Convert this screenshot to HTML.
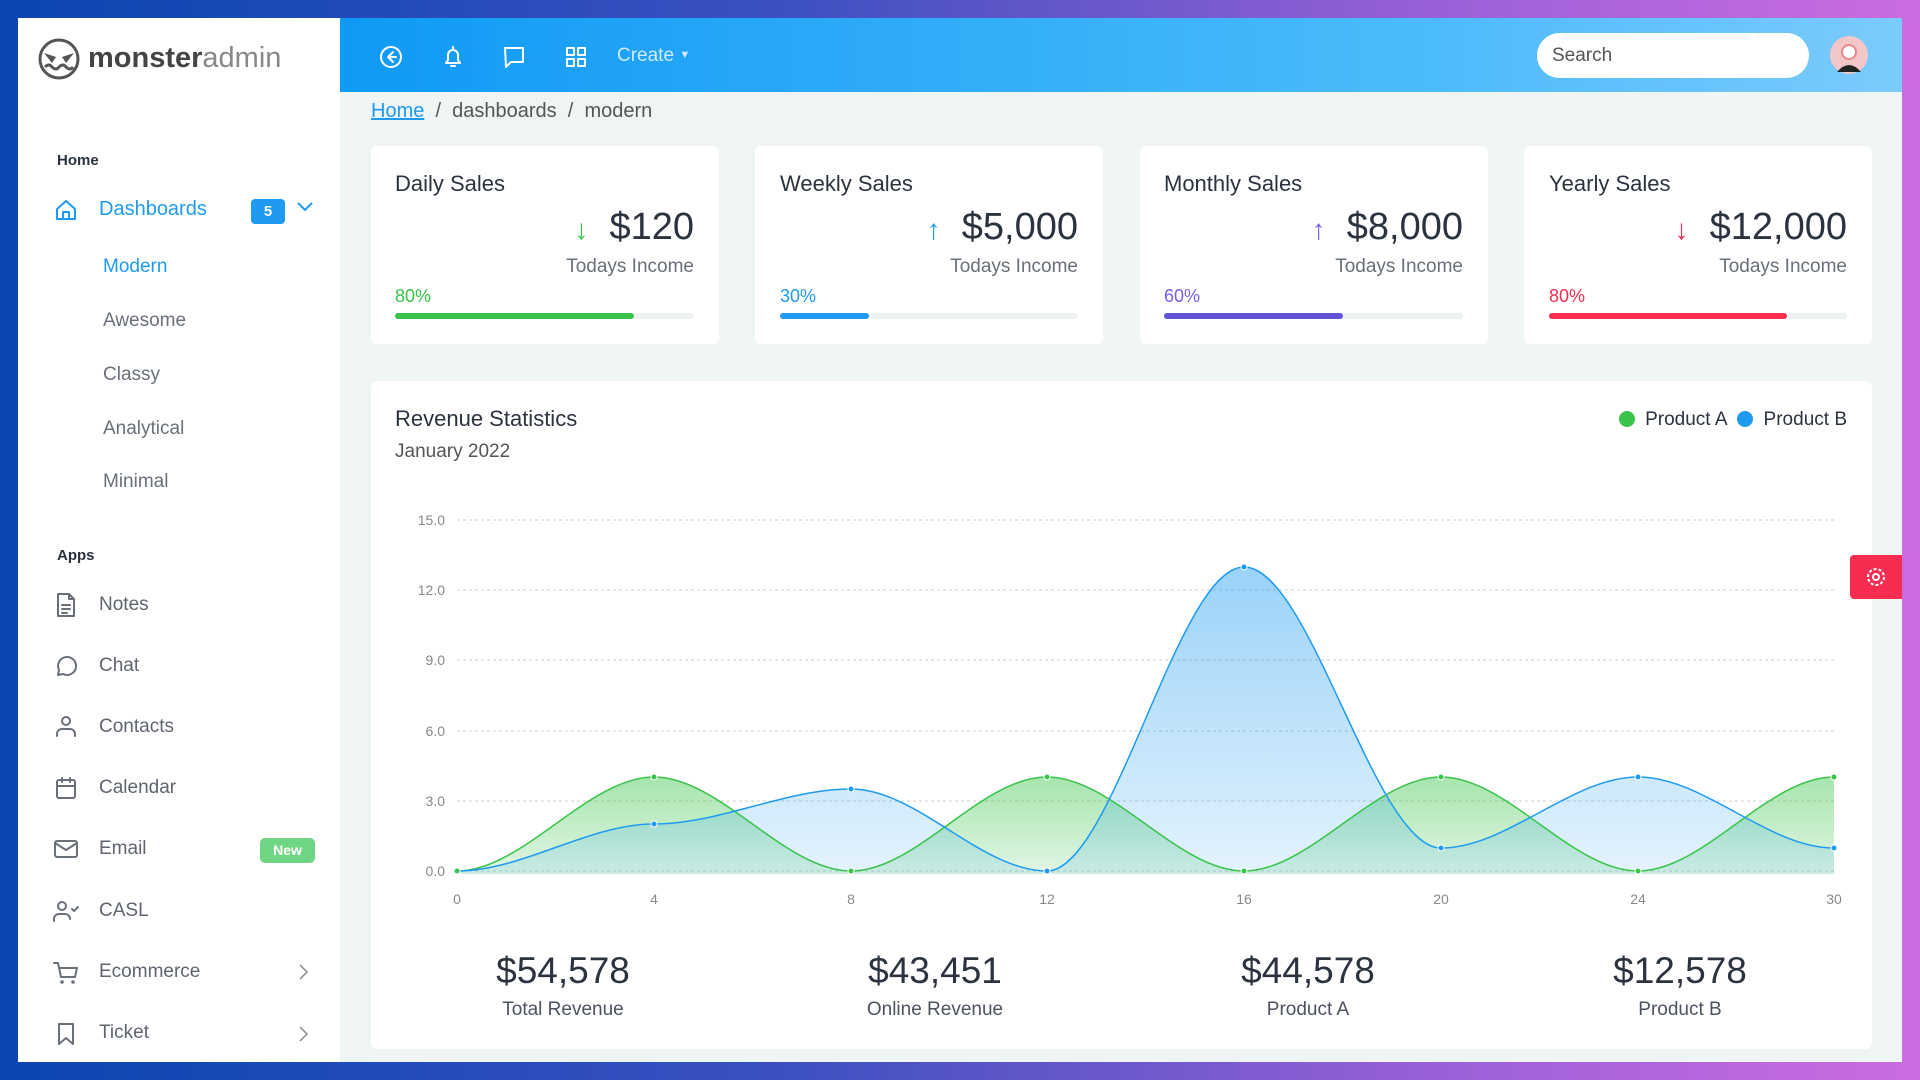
<!DOCTYPE html>
<html><head><meta charset="utf-8"><style>
*{margin:0;padding:0;box-sizing:border-box}
body{width:1920px;height:1080px;overflow:hidden;font-family:"Liberation Sans",sans-serif;background:linear-gradient(90deg,#0a46b0 0%,#3a50c0 40%,#9a60d8 75%,#cc6ce0 100%);position:relative}
.a{position:absolute}
#side{left:18px;top:18px;width:322px;height:1044px;background:#fff}
#main{left:340px;top:92px;width:1562px;height:970px;background:#eff4f5}
#hdr{left:340px;top:18px;width:1562px;height:74px;background:linear-gradient(90deg,#0f9af5,#4cbbfb 70%,#7ccafc)}
.cap{font-size:15px;font-weight:bold;color:#2b3340}
.it{font-size:19px;color:#5f6570}
.sub{font-size:19px;color:#6a707a}
.ic{stroke:#6a707a;fill:none;stroke-width:2;stroke-linecap:round;stroke-linejoin:round}
.card{background:#fff;border-radius:6px}
.ct{font-size:22px;color:#2b3340}
.amt{font-size:38px;color:#2b3340;text-align:right}
.ti{font-size:19px;color:#6a707a;text-align:right}
.bar{height:6px;border-radius:3px;background:#eef2f3}
.hi{stroke:#fff;fill:none;stroke-width:2;stroke-linecap:round;stroke-linejoin:round}
.sv{font-size:37px;color:#2b3340;text-align:center;width:300px}
.sl{font-size:19px;color:#4c5260;text-align:center;width:300px}
</style></head><body>
<div class="a" id="side"></div>
<div class="a" id="main"></div>
<div class="a" id="hdr"></div>

<svg class="a" style="left:36px;top:37px" width="46" height="44" viewBox="0 0 46 44"><circle cx="23" cy="22" r="19" fill="none" stroke="#555" stroke-width="3"/><path d="M8 16 L20 20 L16 26 Z M38 16 L26 20 L30 26 Z" fill="#555"/><path d="M9 30 q4 -4 7 0 q4 4 7 0 q4 -4 7 0 q4 4 7 0" stroke="#555" stroke-width="3" fill="none"/></svg>
<div class="a" style="left:88px;top:42px;font-size:29px;color:#444"><b>monster</b><span style="color:#888">admin</span></div>

<div class="a cap" style="left:57px;top:152px">Home</div>
<svg class="a" style="left:54px;top:198px" width="24" height="24" viewBox="0 0 24 24"><path d="M3 11 L12 3 L21 11 V21 H3 Z M9 21 V14 H15 V21" stroke="#1e9bf0" stroke-width="2" fill="none" stroke-linejoin="round"/></svg>
<div class="a" style="left:99px;top:198px;font-size:20px;color:#1e9bf0">Dashboards</div>
<div class="a" style="left:251px;top:199px;width:34px;height:25px;background:#1e9bf0;border-radius:4px;color:#fff;font-size:15px;font-weight:bold;text-align:center;line-height:25px">5</div>
<svg class="a" style="left:295px;top:200px" width="20" height="14" viewBox="0 0 20 14"><path d="M3 3 L10 10 L17 3" stroke="#1e9bf0" stroke-width="2" fill="none"/></svg>
<div class="a" style="left:103px;top:256px;font-size:19px;color:#1e9bf0">Modern</div>
<div class="a sub" style="left:103px;top:310px">Awesome</div>
<div class="a sub" style="left:103px;top:364px">Classy</div>
<div class="a sub" style="left:103px;top:418px">Analytical</div>
<div class="a sub" style="left:103px;top:471px">Minimal</div>
<div class="a cap" style="left:57px;top:547px">Apps</div>

<svg class="a" style="left:54px;top:592px" width="24" height="26" viewBox="0 0 24 26"><path class="ic" d="M4 2 H15 L20 7 V24 H4 Z M15 2 V7 H20 M8 13 H16 M8 17 H16 M8 21 H13"/></svg>
<div class="a it" style="left:99px;top:594px">Notes</div>
<svg class="a" style="left:54px;top:654px" width="24" height="24" viewBox="0 0 24 24"><path class="ic" d="M4 21 L5 16 A9 9 0 1 1 9 20 Z"/></svg>
<div class="a it" style="left:99px;top:655px">Chat</div>
<svg class="a" style="left:54px;top:714px" width="24" height="24" viewBox="0 0 24 24"><circle class="ic" cx="12" cy="7" r="4"/><path class="ic" d="M3 22 V20 A5 5 0 0 1 8 15 H16 A5 5 0 0 1 21 20 V22"/></svg>
<div class="a it" style="left:99px;top:716px">Contacts</div>
<svg class="a" style="left:54px;top:776px" width="24" height="24" viewBox="0 0 24 24"><rect class="ic" x="3" y="4" width="18" height="18" rx="2"/><path class="ic" d="M3 10 H21 M8 2 V6 M16 2 V6"/></svg>
<div class="a it" style="left:99px;top:777px">Calendar</div>
<svg class="a" style="left:53px;top:838px" width="26" height="22" viewBox="0 0 26 22"><rect class="ic" x="2" y="3" width="22" height="16" rx="2"/><path class="ic" d="M2 5 L13 12 L24 5"/></svg>
<div class="a it" style="left:99px;top:838px">Email</div>
<div class="a" style="left:260px;top:838px;width:55px;height:25px;background:#6fd683;border-radius:5px;color:#fff;font-size:14px;font-weight:bold;text-align:center;line-height:25px">New</div>
<svg class="a" style="left:52px;top:899px" width="28" height="24" viewBox="0 0 28 24"><circle class="ic" cx="10" cy="7" r="4"/><path class="ic" d="M2 22 V20 A5 5 0 0 1 7 15 H13 A5 5 0 0 1 18 20 M20 10 L22 12 L26 8"/></svg>
<div class="a it" style="left:99px;top:900px">CASL</div>
<svg class="a" style="left:52px;top:960px" width="28" height="26" viewBox="0 0 28 26"><path class="ic" d="M2 3 H6 L9 17 H23 L25 8 H8"/><circle cx="10" cy="22" r="1.8" fill="#6a707a"/><circle cx="21" cy="22" r="1.8" fill="#6a707a"/></svg>
<div class="a it" style="left:99px;top:961px">Ecommerce</div>
<svg class="a" style="left:297px;top:962px" width="14" height="20" viewBox="0 0 14 20"><path d="M3 3 L10 10 L3 17" stroke="#888" stroke-width="1.5" fill="none"/></svg>
<svg class="a" style="left:55px;top:1021px" width="22" height="26" viewBox="0 0 22 26"><path class="ic" d="M4 3 H18 V23 L11 17 L4 23 Z"/></svg>
<div class="a it" style="left:99px;top:1022px">Ticket</div>
<svg class="a" style="left:297px;top:1024px" width="14" height="20" viewBox="0 0 14 20"><path d="M3 3 L10 10 L3 17" stroke="#888" stroke-width="1.5" fill="none"/></svg>

<svg class="a" style="left:378px;top:44px" width="26" height="26" viewBox="0 0 26 26"><circle class="hi" cx="13" cy="13" r="10"/><path class="hi" d="M15 8 L10 13 L15 18 M10 13 H18"/></svg>
<svg class="a" style="left:440px;top:44px" width="26" height="26" viewBox="0 0 26 26"><path class="hi" d="M6 19 H20 L18 16 V11 A5 5 0 0 0 8 11 V16 Z M11 22 H15 M13 3 V5"/></svg>
<svg class="a" style="left:501px;top:44px" width="26" height="26" viewBox="0 0 26 26"><path class="hi" d="M4 4 H22 V18 H10 L5 23 Z"/></svg>
<svg class="a" style="left:563px;top:44px" width="26" height="26" viewBox="0 0 26 26"><rect class="hi" x="4" y="4" width="7" height="7"/><rect class="hi" x="15" y="4" width="7" height="7"/><rect class="hi" x="4" y="15" width="7" height="7"/><rect class="hi" x="15" y="15" width="7" height="7"/></svg>
<div class="a" style="left:617px;top:45px;font-size:19px;color:#cfeafd">Create <span style="font-size:11px;vertical-align:3px">▼</span></div>
<div class="a" style="left:1537px;top:33px;width:272px;height:45px;background:#fff;border-radius:23px;font-size:19px;color:#555;padding:12px 15px">Search</div>
<svg class="a" style="left:1830px;top:36px" width="38" height="38" viewBox="0 0 38 38"><circle cx="19" cy="19" r="19" fill="#f3c7c7"/><circle cx="19" cy="16" r="7" fill="#fff" stroke="#e58a8a" stroke-width="2"/><path d="M7 36 Q19 22 31 36 Z" fill="#222"/></svg>

<div class="a" style="left:371px;top:100px;font-size:20px;color:#555"><span style="color:#1e9bf0;text-decoration:underline">Home</span>&nbsp; / &nbsp;dashboards&nbsp; / &nbsp;modern</div>

<div class="a card" style="left:371px;top:146px;width:348px;height:198px"></div>
<div class="a card" style="left:755px;top:146px;width:348px;height:198px"></div>
<div class="a card" style="left:1140px;top:146px;width:348px;height:198px"></div>
<div class="a card" style="left:1524px;top:146px;width:348px;height:198px"></div>

<div class="a ct" style="left:395px;top:171px">Daily Sales</div>
<div class="a amt" style="left:395px;top:206px;width:299px"><span style="color:#39c449;font-size:28px">↓</span>&nbsp; $120</div>
<div class="a ti" style="left:395px;top:256px;width:299px">Todays Income</div>
<div class="a" style="left:395px;top:286px;font-size:18px;color:#39c449">80%</div>
<div class="a bar" style="left:395px;top:313px;width:299px"><div class="bar" style="width:80%;background:#39c449"></div></div>

<div class="a ct" style="left:780px;top:171px">Weekly Sales</div>
<div class="a amt" style="left:780px;top:206px;width:298px"><span style="color:#1e9bf0;font-size:28px">↑</span>&nbsp; $5,000</div>
<div class="a ti" style="left:780px;top:256px;width:298px">Todays Income</div>
<div class="a" style="left:780px;top:286px;font-size:18px;color:#1e9bf0">30%</div>
<div class="a bar" style="left:780px;top:313px;width:298px"><div class="bar" style="width:30%;background:#1e9bf0"></div></div>

<div class="a ct" style="left:1164px;top:171px">Monthly Sales</div>
<div class="a amt" style="left:1164px;top:206px;width:299px"><span style="color:#7460ee;font-size:28px">↑</span>&nbsp; $8,000</div>
<div class="a ti" style="left:1164px;top:256px;width:299px">Todays Income</div>
<div class="a" style="left:1164px;top:286px;font-size:18px;color:#7460ee">60%</div>
<div class="a bar" style="left:1164px;top:313px;width:299px"><div class="bar" style="width:60%;background:#6153d6"></div></div>

<div class="a ct" style="left:1549px;top:171px">Yearly Sales</div>
<div class="a amt" style="left:1549px;top:206px;width:298px"><span style="color:#f62d51;font-size:28px">↓</span>&nbsp; $12,000</div>
<div class="a ti" style="left:1549px;top:256px;width:298px">Todays Income</div>
<div class="a" style="left:1549px;top:286px;font-size:18px;color:#f62d51">80%</div>
<div class="a bar" style="left:1549px;top:313px;width:298px"><div class="bar" style="width:80%;background:#f62d51"></div></div>

<div class="a card" style="left:371px;top:381px;width:1501px;height:668px"></div>
<div class="a" style="left:395px;top:406px;font-size:22px;color:#2b3340">Revenue Statistics</div>
<div class="a" style="left:395px;top:441px;font-size:19px;color:#555">January 2022</div>
<div class="a" style="left:1599px;top:409px;width:248px;text-align:right;font-size:19px;color:#2b3340;white-space:nowrap"><span style="display:inline-block;width:16px;height:16px;border-radius:50%;background:#39c449;vertical-align:-2px"></span>&nbsp; Product A &nbsp;<span style="display:inline-block;width:16px;height:16px;border-radius:50%;background:#1e9bf0;vertical-align:-2px"></span>&nbsp; Product B</div>

<svg class="a" style="left:0;top:0" width="1920" height="1080">
<defs>
<linearGradient id="gb" x1="0" y1="0" x2="0" y2="1"><stop offset="0" stop-color="#1e9bf0" stop-opacity=".45"/><stop offset="1" stop-color="#1e9bf0" stop-opacity=".12"/></linearGradient>
<linearGradient id="gg" x1="0" y1="0" x2="0" y2="1"><stop offset="0" stop-color="#39c449" stop-opacity=".45"/><stop offset="1" stop-color="#39c449" stop-opacity=".15"/></linearGradient>
</defs>
<g stroke="#ccc" stroke-dasharray="3 3" stroke-width="1">
<line x1="457" y1="520" x2="1834" y2="520"/><line x1="457" y1="590" x2="1834" y2="590"/><line x1="457" y1="660" x2="1834" y2="660"/><line x1="457" y1="731" x2="1834" y2="731"/><line x1="457" y1="801" x2="1834" y2="801"/><line x1="457" y1="871" x2="1834" y2="871"/>
</g>
<g font-family="Liberation Sans" font-size="14" fill="#888" text-anchor="end">
<text x="445" y="525">15.0</text><text x="445" y="595">12.0</text><text x="445" y="665">9.0</text><text x="445" y="736">6.0</text><text x="445" y="806">3.0</text><text x="445" y="876">0.0</text>
</g>
<g font-family="Liberation Sans" font-size="14" fill="#888" text-anchor="middle">
<text x="457" y="904">0</text><text x="654" y="904">4</text><text x="851" y="904">8</text><text x="1047" y="904">12</text><text x="1244" y="904">16</text><text x="1441" y="904">20</text><text x="1638" y="904">24</text><text x="1834" y="904">30</text>
</g>
<path d="M457,871 C523,871 588,777 654,777 C720,777 785,871 851,871 C917,871 981,777 1047,777 C1113,777 1178,871 1244,871 C1310,871 1375,777 1441,777 C1507,777 1572,871 1638,871 C1704,871 1768,777 1834,777 V874 H457 Z" fill="url(#gg)"/>
<path d="M457,871 C523,871 588,824 654,824 C720,824 785,789 851,789 C917,789 981,871 1047,871 C1113,871 1178,567 1244,567 C1310,567 1375,848 1441,848 C1507,848 1572,777 1638,777 C1704,777 1768,848 1834,848 V874 H457 Z" fill="url(#gb)"/>
<path d="M457,871 C523,871 588,777 654,777 C720,777 785,871 851,871 C917,871 981,777 1047,777 C1113,777 1178,871 1244,871 C1310,871 1375,777 1441,777 C1507,777 1572,871 1638,871 C1704,871 1768,777 1834,777" fill="none" stroke="#39c449" stroke-width="1.5"/>
<path d="M457,871 C523,871 588,824 654,824 C720,824 785,789 851,789 C917,789 981,871 1047,871 C1113,871 1178,567 1244,567 C1310,567 1375,848 1441,848 C1507,848 1572,777 1638,777 C1704,777 1768,848 1834,848" fill="none" stroke="#1e9bf0" stroke-width="1.5"/>
<g fill="#39c449" stroke="#fff"><circle cx="457" cy="871" r="3"/><circle cx="654" cy="777" r="3"/><circle cx="851" cy="871" r="3"/><circle cx="1047" cy="777" r="3"/><circle cx="1244" cy="871" r="3"/><circle cx="1441" cy="777" r="3"/><circle cx="1638" cy="871" r="3"/><circle cx="1834" cy="777" r="3"/></g>
<g fill="#1e9bf0" stroke="#fff"><circle cx="654" cy="824" r="3"/><circle cx="851" cy="789" r="3"/><circle cx="1047" cy="871" r="3"/><circle cx="1244" cy="567" r="3"/><circle cx="1441" cy="848" r="3"/><circle cx="1638" cy="777" r="3"/><circle cx="1834" cy="848" r="3"/></g>
</svg>

<div class="a sv" style="left:413px;top:950px">$54,578</div>
<div class="a sl" style="left:413px;top:999px">Total Revenue</div>
<div class="a sv" style="left:785px;top:950px">$43,451</div>
<div class="a sl" style="left:785px;top:999px">Online Revenue</div>
<div class="a sv" style="left:1158px;top:950px">$44,578</div>
<div class="a sl" style="left:1158px;top:999px">Product A</div>
<div class="a sv" style="left:1530px;top:950px">$12,578</div>
<div class="a sl" style="left:1530px;top:999px">Product B</div>

<div class="a" style="left:1850px;top:555px;width:52px;height:44px;background:#f62d51;border-radius:4px 0 0 4px"></div>
<svg class="a" style="left:1864px;top:565px" width="24" height="24" viewBox="0 0 24 24"><circle cx="12" cy="12" r="3" stroke="#fff" stroke-width="2" fill="none"/><circle cx="12" cy="12" r="8" stroke="#fff" stroke-width="2" stroke-dasharray="3 2" fill="none"/></svg>
</body></html>
